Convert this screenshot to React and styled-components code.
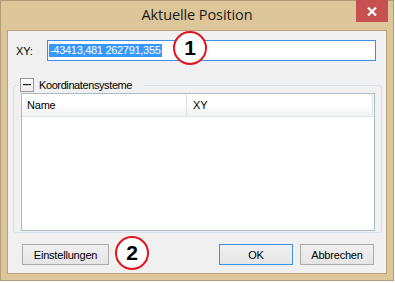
import React from "react";
import styled, { createGlobalStyle } from "styled-components";

const Global = createGlobalStyle`
  html, body { margin: 0; padding: 0; background: #ffffff; }
  body { font-family: "Liberation Sans", Arial, sans-serif; }
  * { box-sizing: border-box; }
`;

const Window = styled.div`
  position: relative;
  width: 394px;
  height: 281px;
  border: 1px solid #b09c76;
  background: #dec69b;
  display: flex;
  flex-direction: column;
`;

const TitleBar = styled.div`
  height: 29px;
  display: grid;
  grid-template-columns: 1fr auto 1fr;
  align-items: start;
`;

const Title = styled.div`
  grid-column: 2;
  font-family: "Open Sans", "Liberation Sans", sans-serif;
  font-size: 14.5px;
  color: #1a1a1a;
  line-height: 28px;
  letter-spacing: -0.1px;
`;

const CloseButton = styled.div`
  grid-column: 3;
  justify-self: end;
  margin-right: 5px;
  margin-top: -1px;
  width: 32px;
  height: 22px;
  background: #c75050;
  display: flex;
  align-items: center;
  justify-content: center;
`;

const Client = styled.div`
  margin: 0 6px 6px 6px;
  border: 1px solid #b8a37d;
  background: #f0f0f0;
  height: 244px;
  display: flex;
  flex-direction: column;
  font-size: 11px;
  color: #000;
`;

const XYRow = styled.div`
  margin-top: 9px;
  height: 21px;
  display: flex;
  align-items: center;
  padding: 0 10px 0 8px;
`;

const Label = styled.div`
  width: 31px;
  font-size: 11px;
  letter-spacing: -0.2px;
`;

const TextBox = styled.div`
  flex: 1;
  height: 21px;
  border: 1px solid #3c8fe8;
  background: #fff;
  display: flex;
  align-items: center;
  padding-left: 1px;
`;

const Selected = styled.span`
  background: #3399ff;
  color: #fff;
  font-size: 11px;
  line-height: 13px;
  padding-left: 1px;
  letter-spacing: -0.3px;
  white-space: nowrap;
`;

const Caret = styled.span`
  width: 1px;
  height: 13px;
  background: #cc7a22;
`;

const Group = styled.fieldset`
  margin: 17px 4px 0 5px;
  padding: 0;
  min-width: 0;
  border: 1px solid #d5dfe5;
  border-radius: 3px;
`;

const Legend = styled.legend`
  margin-left: 4px;
  padding: 0 12px 0 2px;
  height: 14px;
  display: flex;
  align-items: center;
  gap: 5px;
  font-size: 11px;
  letter-spacing: -0.4px;
`;

const Toggle = styled.span`
  width: 14px;
  height: 14px;
  border: 1px solid #9a9a9a;
  background: linear-gradient(#fcfcfc, #ececec);
  display: flex;
  align-items: center;
  justify-content: center;
`;

const List = styled.div`
  margin: 1px 6px 1px 7px;
  height: 138px;
  border: 1px solid #a9bacb;
  background: #fff;
  display: flex;
  flex-direction: column;
`;

const Header = styled.div`
  display: flex;
  height: 23px;
`;

const HeaderCell = styled.div`
  width: ${(p) => p.$w}px;
  height: 23px;
  padding-left: ${(p) => p.$pad}px;
  display: flex;
  align-items: center;
  background: linear-gradient(#ffffff 0%, #ffffff 45%, #f1f2f3 100%);
  border-right: 1px solid #dfe2e5;
  border-bottom: 1px solid #dfe2e5;
  font-size: 11px;
  letter-spacing: -0.2px;
`;

const ButtonRow = styled.div`
  margin-top: 11px;
  height: 21px;
  display: flex;
  padding: 0 12px 0 14px;
  gap: 7px;
`;

const Button = styled.div`
  width: ${(p) => p.$w}px;
  height: 21px;
  margin-left: ${(p) => (p.$push ? "auto" : "0")};
  border: 1px solid ${(p) => (p.$default ? "#3c8fe8" : "#acacac")};
  background: linear-gradient(#f0f0f0, #e5e5e5);
  display: flex;
  align-items: center;
  justify-content: center;
  font-size: 11px;
  letter-spacing: -0.2px;
`;

const Marker = styled.div`
  position: absolute;
  left: ${(p) => p.$x}px;
  top: ${(p) => p.$y}px;
  width: 34px;
  height: 34px;
  border-radius: 50%;
  border: 2px solid #e0141e;
  background: #fff;
  display: flex;
  align-items: center;
  justify-content: center;
  font-family: "Liberation Sans", Arial, sans-serif;
  font-weight: bold;
  font-size: 21px;
  color: #000;
`;

export default function App() {
  return (
    <>
      <Global />
      <Window>
        <TitleBar>
          <Title>Aktuelle Position</Title>
          <CloseButton>
            <svg width="10" height="9" viewBox="0 0 10 9">
              <path d="M1 0.5 L9 8.5 M9 0.5 L1 8.5" stroke="#fff" strokeWidth="2.2" />
            </svg>
          </CloseButton>
        </TitleBar>
        <Client>
          <XYRow>
            <Label>XY:</Label>
            <TextBox>
              <Selected>-43413,481 262791,355</Selected>
              <Caret />
            </TextBox>
          </XYRow>
          <Group>
            <Legend>
              <Toggle>
                <svg width="8" height="2" viewBox="0 0 8 2">
                  <rect x="0" y="0" width="8" height="1.2" fill="#222" />
                </svg>
              </Toggle>
              Koordinatensysteme
            </Legend>
            <List>
              <Header>
                <HeaderCell $w={165} $pad={5}>Name</HeaderCell>
                <HeaderCell $w={186} $pad={6}>XY</HeaderCell>
              </Header>
            </List>
          </Group>
          <ButtonRow>
            <Button $w={87}>Einstellungen</Button>
            <Button $w={74} $push $default>OK</Button>
            <Button $w={74}>Abbrechen</Button>
          </ButtonRow>
        </Client>
        <Marker $x={172} $y={30}>1</Marker>
        <Marker $x={114} $y={235}>2</Marker>
      </Window>
    </>
  );
}
